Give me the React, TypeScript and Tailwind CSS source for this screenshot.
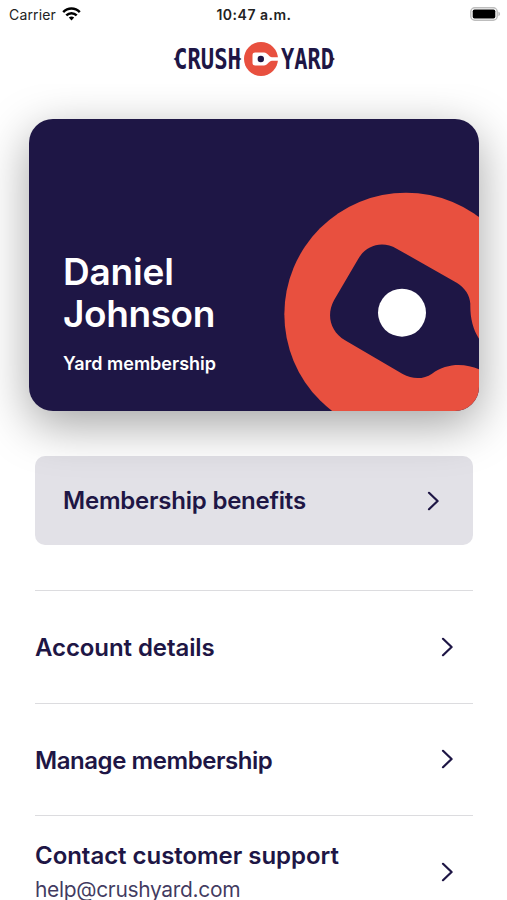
const links = [
  { title: "Account details", tracking: "tracking-[-0.08px]" },
  { title: "Manage membership", tracking: "tracking-[-0.44px]" },
  { title: "Contact customer support", tracking: "tracking-[-0.04px]", sub: "help@crushyard.com" },
]

function Chevron() {
  return (
    <svg
      width="12"
      height="20"
      viewBox="0 0 12 20"
      fill="none"
      stroke="#1e1645"
      strokeWidth="2.2"
      strokeLinecap="round"
      strokeLinejoin="round"
    >
      <path d="M2 1.8 L10.6 10 L2 18.2" />
    </svg>
  )
}

function StatusBar() {
  return (
    <div className="grid h-7 grid-cols-3 items-center pr-[6px] pl-[9px] text-[#222]">
      <div className="flex items-center gap-[6px]">
        <span className="text-[14px] tracking-[0.15px]">Carrier</span>
        <svg width="19" height="14" viewBox="0 0 19 14" fill="none" stroke="#000" strokeWidth="2.5">
          <path d="M1.2 5.2 C5.9 0.4 13.1 0.4 17.8 5.2" />
          <path d="M4.3 8.4 C7.3 5.4 11.7 5.4 14.7 8.4" />
          <path d="M6.8 10.6 C8.4 9.1 10.6 9.1 12.2 10.6 L9.5 13.4 Z" fill="#000" stroke="none" />
        </svg>
      </div>
      <span className="pr-[2px] text-center text-[14px] font-semibold tracking-[0.5px]">10:47 a.m.</span>
      <div className="flex justify-end">
        <svg width="31" height="14" viewBox="0 0 31 14">
          <rect x="0.8" y="0.8" width="26.4" height="12.4" rx="4" fill="#fff" stroke="#bdbdbd" strokeWidth="1.4" />
          <rect x="2.7" y="2.5" width="22.6" height="9" rx="1.8" fill="#000" />
          <path d="M28.4 4.8 C30.6 5.4 30.6 8.6 28.4 9.2 Z" fill="#bdbdbd" />
        </svg>
      </div>
    </div>
  )
}

function Logo() {
  return (
    <svg width="178" height="36" viewBox="-7 0 178 36" fill="#1e1645">
      <g fontFamily="'DejaVu Sans Mono', monospace" fontWeight="700" fontSize="28">
        <text x="2" y="28" textLength="67" lengthAdjust="spacingAndGlyphs">CRUSH</text>
        <text x="109" y="28" textLength="53" lengthAdjust="spacingAndGlyphs">YARD</text>
      </g>
      {/* small spurs on the stems */}
      <path d="M1.5 18 l3 -2 v4 Z M69.5 18 l-3 -2 v4 Z M163 18 l-3 -2 v4 Z" />
      <circle cx="89" cy="18" r="17" fill="#e8503f" />
      <path
        d="M83.5 11.5 H92 C95.5 11.5 97 16.2 100 16.2 H107 V19.8 H100 C97 19.8 95.5 24.5 92 24.5 H83.5 C81 24.5 80.5 23.5 80.5 21.5 V14.5 C80.5 12.5 81 11.5 83.5 11.5 Z"
        fill="#fff"
      />
      <circle cx="88.8" cy="18" r="3.2" />
    </svg>
  )
}

function MembershipCard() {
  return (
    <div className="flex h-[292px] w-[450px] items-end justify-between overflow-hidden rounded-[24px] bg-[#1e1645] pl-[34px] shadow-[0_14px_48px_rgba(0,0,0,0.36)]">
      <div className="pb-[35px] text-white">
        <div className="text-[37px] leading-[42px] font-semibold">
          <p className="tracking-[-0.2px]">Daniel</p>
          <p className="tracking-[-0.4px]">Johnson</p>
        </div>
        <p className="mt-[17px] text-[18px] leading-6 font-semibold">Yard membership</p>
      </div>
      <svg className="shrink-0" width="209" height="231" viewBox="0 0 627 693">
        <circle cx="408" cy="403" r="365" fill="#e8503f" />
        <path
          d="M265 236 L192 361 C168 405 181 455 225 481 L398 582 C428 599 461 598 486 581 C530 548 585 549 627 568 L627 476 C608 448 600 411 601 371 C600 346 585 323 560 308 L380 206 C338 182 290 194 265 236 Z"
          fill="#1e1645"
        />
        <circle cx="396" cy="398" r="72" fill="#fff" />
      </svg>
    </div>
  )
}

export default function App() {
  return (
    <div className="h-[900px] w-[507px] overflow-hidden bg-white font-['Inter',sans-serif] text-[#1e1645]">
      <header className="relative z-10 h-[84px] bg-white">
        <StatusBar />
        <div className="flex justify-center pt-[13px]">
          <Logo />
        </div>
      </header>

      <div className="pt-[35px] pl-[29px]">
        <MembershipCard />
      </div>

      <main className="px-[35px] pt-[45px]">
        <button className="flex h-[89px] w-[438px] items-center justify-between rounded-[10px] bg-[#1e1645]/13 pr-[34px] pl-7">
          <span className="text-[24px] font-semibold tracking-[-0.22px]">Membership benefits</span>
          <Chevron />
        </button>

        <ul className="mt-[45px] w-[438px]">
          {links.map((link) => (
            <li
              key={link.title}
              className="flex h-[112.5px] items-center justify-between border-t border-[#dcdcdf] pr-5"
            >
              <div className="pt-[3px]">
                <p className={`${link.tracking} text-[24px] leading-[34px] font-semibold`}>{link.title}</p>
                {link.sub && (
                  <p className="text-[21px] leading-[34px] tracking-[-0.34px] text-[#1e1645]/85">{link.sub}</p>
                )}
              </div>
              <Chevron />
            </li>
          ))}
        </ul>
      </main>
    </div>
  )
}
